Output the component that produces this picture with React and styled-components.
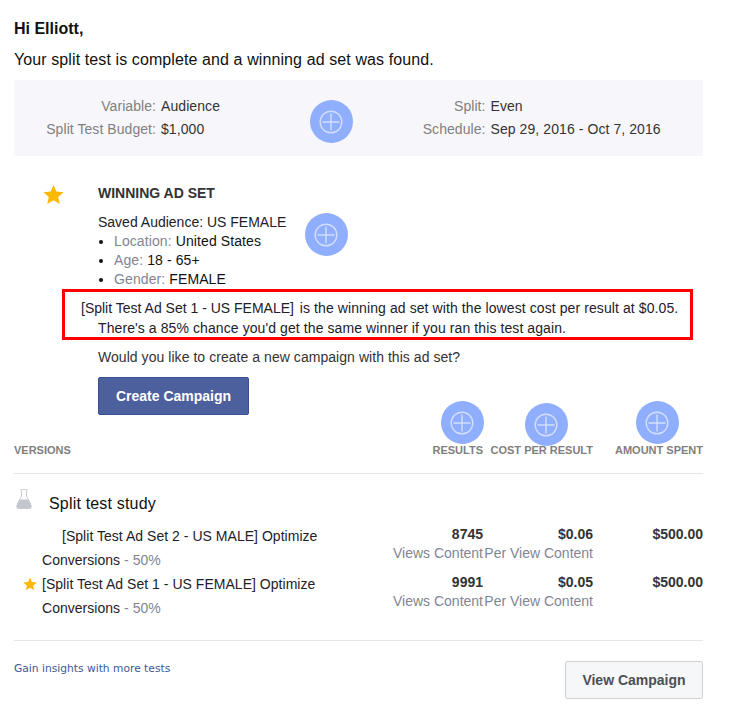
import React from 'react';
import styled, { createGlobalStyle } from 'styled-components';

const Global = createGlobalStyle`
  body {
    margin: 0;
    background: #fff;
    font-family: "Liberation Sans", Arial, sans-serif;
    color: #1d2129;
  }
`;

const Page = styled.div`
  position: relative;
  width: 689px;
  height: 705px;
  padding: 0 14px;
  box-sizing: content-box;
  overflow: hidden;
`;

const Greeting = styled.div`
  padding-top: 20px;
  font-size: 16px;
  line-height: 18px;
  font-weight: 700;
  color: #111;
`;

const Intro = styled.div`
  margin-top: 13px;
  font-size: 16px;
  line-height: 18px;
  letter-spacing: 0.1px;
  color: #111;
`;

const Summary = styled.div`
  position: relative;
  display: grid;
  grid-template-columns: 1fr 1fr;
  height: 76px;
  margin-top: 11px;
  padding-top: 15px;
  box-sizing: border-box;
  background: #f7f7fb;
`;

const Pairs = styled.dl`
  display: grid;
  grid-template-columns: ${(p) => p.$label}px auto;
  grid-auto-rows: 23px;
  column-gap: 5px;
  margin: 0;
  font-size: 14px;
  line-height: 23px;
`;

const Term = styled.dt`
  text-align: right;
  letter-spacing: 0.06px;
  color: #7f7f7f;
`;

const Value = styled.dd`
  margin: 0;
  letter-spacing: 0.08px;
  color: #333;
`;

const Badge = styled.div`
  position: absolute;
  left: ${(p) => p.$x}px;
  top: ${(p) => p.$y}px;
  display: flex;
  align-items: center;
  justify-content: center;
  width: 43px;
  height: 43px;
  border-radius: 50%;
  background: #8faefe;
`;

const Winner = styled.section`
  position: relative;
  padding: 28px 0 0 84px;
`;

const BigStar = styled.div`
  position: absolute;
  left: 29px;
  top: 28px;
  display: flex;
`;

const Title = styled.h2`
  margin: 0;
  font-size: 14px;
  line-height: 18px;
  font-weight: 700;
  color: #333;
`;

const Audience = styled.div`
  margin-top: 11px;
  font-size: 14px;
  line-height: 19px;
  color: #1d2129;
`;

const Criteria = styled.ul`
  margin: 0;
  padding: 0 0 0 16px;
  font-size: 14px;
  line-height: 19px;
  letter-spacing: 0.1px;
`;

const Criterion = styled.li`
  color: #111;
`;

const Muted = styled.span`
  color: #7f8595;
`;

const Callout = styled.div`
  margin: 0 10px 0 -36px;
  height: 51px;
  padding: 6px 0 0 16px;
  box-sizing: border-box;
  border: 3px solid #f00;
  font-size: 14px;
  line-height: 20px;
  color: #1d2129;
`;

const CalloutLine = styled.div`
  padding-left: ${(p) => p.$indent || 0}px;
  white-space: nowrap;
`;

const CalloutName = styled.span`
  margin-right: 2px;
`;

const CalloutText = styled.span`
  letter-spacing: 0.09px;
`;

const Question = styled.div`
  margin-top: 8px;
  font-size: 14px;
  line-height: 19px;
  letter-spacing: 0.05px;
  color: #333;
`;

const PrimaryButton = styled.button`
  display: block;
  width: 151px;
  height: 38px;
  margin-top: 10px;
  padding: 0;
  border: 1px solid #3b4f8f;
  border-radius: 2px;
  background: #4c609d;
  color: #fff;
  font: 700 14px "Liberation Sans", Arial, sans-serif;
`;

const Columns = `
  display: grid;
  grid-template-columns: 359px 110px 110px 110px;
`;

const TableHead = styled.div`
  ${Columns}
  height: 59px;
  padding-top: 28px;
  box-sizing: border-box;
  border-bottom: 1px solid #e5e5e5;
  font-size: 11px;
  line-height: 14px;
  font-weight: 700;
  color: #7f7f7f;
`;

const HeadCell = styled.div`
  text-align: ${(p) => (p.$left ? 'left' : 'right')};
  white-space: nowrap;
`;

const Study = styled.div`
  display: flex;
  align-items: flex-start;
  gap: 17px;
  margin-top: 15px;
  padding-left: 2px;
`;

const StudyTitle = styled.div`
  padding-top: 4px;
  font-size: 16px;
  line-height: 22px;
  letter-spacing: 0.18px;
  color: #111;
`;

const Rows = styled.div`
  margin-top: 9px;
  padding-bottom: 20px;
  border-bottom: 1px solid #e5e5e5;
`;

const Row = styled.div`
  ${Columns}
  height: 48px;
`;

const Name = styled.div`
  padding-left: 28px;
  font-size: 14px;
  line-height: 24px;
  letter-spacing: 0.03px;
  color: #1d2129;
`;

const NameLine = styled.div`
  padding-left: ${(p) => p.$indent || 0}px;
`;

const SmallStar = styled.span`
  display: inline-block;
  width: 14px;
  height: 14px;
  margin: 0 5px 0 -19px;
  vertical-align: -2px;
`;

const Metric = styled.div`
  margin-top: 1px;
  text-align: right;
  white-space: nowrap;
  font-size: 14px;
  line-height: 19px;
`;

const Figure = styled.div`
  font-weight: 700;
  color: #333;
`;

const Unit = styled.div`
  color: #7f8595;
`;

const Footer = styled.div`
  display: flex;
  justify-content: space-between;
  padding-top: 20px;
`;

const Insight = styled.a`
  margin-top: 1px;
  font-family: "DejaVu Sans", sans-serif;
  font-size: 10.7px;
  line-height: 14px;
  color: #3b5998;
`;

const SecondaryButton = styled.button`
  width: 138px;
  height: 38px;
  padding: 0;
  border: 1px solid #ced0d4;
  border-radius: 2px;
  background: #f6f7f9;
  color: #4b4f56;
  font: 700 14px "Liberation Sans", Arial, sans-serif;
`;

const Plus = () => (
  <svg width="24" height="24" viewBox="0 0 24 24" fill="none" stroke="#d3defe" strokeWidth="1.4">
    <circle cx="12" cy="12" r="10.8" />
    <path d="M12 3.5v17M3.5 12h17" />
  </svg>
);

const Star = ({ size }) => (
  <svg width={size} height={size} viewBox="0 0 24 24" fill="#fdb900">
    <path d="M12 1l3.3 7.6 8.2.8-6.2 5.4 1.9 8.1L12 18.6l-7.2 4.3 1.9-8.1L.5 9.4l8.2-.8z" />
  </svg>
);

const Flask = () => (
  <svg width="16" height="20" viewBox="0 0 16 20">
    <path d="M4.5 .6h7M5.5 .6v6.4L1.4 15M10.5 .6V7l4.1 8" fill="none" stroke="#cdd0d6" strokeWidth="1" />
    <path d="M3.6 10.5h8.8l3 5.4c.9 1.9-.3 4.1-2.3 4.1H2.9c-2 0-3.2-2.2-2.3-4.1z" fill="#c4c7cf" />
  </svg>
);

const rows = [
  { line: '[Split Test Ad Set 2 - US MALE] Optimize', results: '8745', cost: '$0.06', indent: 20 },
  { line: '[Split Test Ad Set 1 - US FEMALE] Optimize', results: '9991', cost: '$0.05', winner: true },
];

export default function App() {
  return (
    <Page>
      <Global />
      <Greeting>Hi Elliott,</Greeting>
      <Intro>Your split test is complete and a winning ad set was found.</Intro>

      <Summary>
        <Pairs $label={142}>
          <Term>Variable:</Term>
          <Value>Audience</Value>
          <Term>Split Test Budget:</Term>
          <Value>$1,000</Value>
        </Pairs>
        <Pairs $label={127}>
          <Term>Split:</Term>
          <Value>Even</Value>
          <Term>Schedule:</Term>
          <Value>Sep 29, 2016 - Oct 7, 2016</Value>
        </Pairs>
        <Badge $x={295.5} $y={20}><Plus /></Badge>
      </Summary>

      <Winner>
        <BigStar><Star size={21} /></BigStar>
        <Title>WINNING AD SET</Title>
        <Audience>Saved Audience: US FEMALE</Audience>
        <Criteria>
          <Criterion><Muted>Location:</Muted> United States</Criterion>
          <Criterion><Muted>Age:</Muted> 18 - 65+</Criterion>
          <Criterion><Muted>Gender:</Muted> FEMALE</Criterion>
        </Criteria>
        <Badge $x={290.5} $y={57}><Plus /></Badge>
        <Callout>
          <CalloutLine>
            <CalloutName>[Split Test Ad Set 1 - US FEMALE]</CalloutName>{' '}
            <CalloutText>is the winning ad set with the lowest cost per result at $0.05.</CalloutText>
          </CalloutLine>
          <CalloutLine $indent={17}>
            <CalloutText>There's a 85% chance you'd get the same winner if you ran this test again.</CalloutText>
          </CalloutLine>
        </Callout>
        <Question>Would you like to create a new campaign with this ad set?</Question>
        <PrimaryButton>Create Campaign</PrimaryButton>
      </Winner>

      <TableHead>
        <HeadCell $left>VERSIONS</HeadCell>
        <HeadCell>RESULTS</HeadCell>
        <HeadCell>COST PER RESULT</HeadCell>
        <HeadCell>AMOUNT SPENT</HeadCell>
      </TableHead>
      <Badge $x={440.5} $y={401}><Plus /></Badge>
      <Badge $x={524.5} $y={403}><Plus /></Badge>
      <Badge $x={635.5} $y={401}><Plus /></Badge>

      <Study>
        <Flask />
        <StudyTitle>Split test study</StudyTitle>
      </Study>
      <Rows>
        {rows.map((r) => (
          <Row key={r.line}>
            <Name>
              <NameLine $indent={r.indent}>
                {r.winner && <SmallStar><Star size={14} /></SmallStar>}
                {r.line}
              </NameLine>
              <NameLine>Conversions <Muted>- 50%</Muted></NameLine>
            </Name>
            <Metric>
              <Figure>{r.results}</Figure>
              <Unit>Views Content</Unit>
            </Metric>
            <Metric>
              <Figure>{r.cost}</Figure>
              <Unit>Per View Content</Unit>
            </Metric>
            <Metric>
              <Figure>$500.00</Figure>
            </Metric>
          </Row>
        ))}
      </Rows>

      <Footer>
        <Insight>Gain insights with more tests</Insight>
        <SecondaryButton>View Campaign</SecondaryButton>
      </Footer>
    </Page>
  );
}
